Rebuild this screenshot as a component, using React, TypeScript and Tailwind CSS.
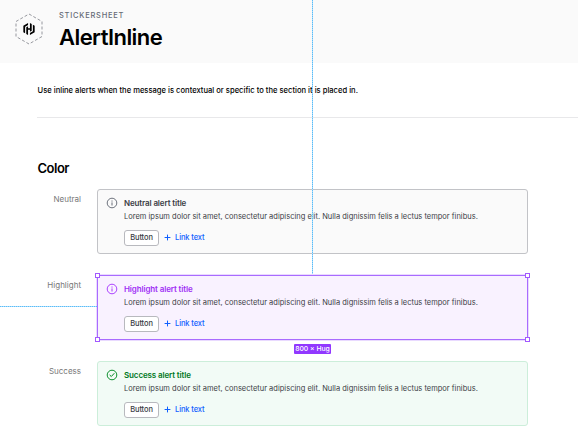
import { SiHashicorp } from 'react-icons/si';

type Tone = 'neutral' | 'highlight' | 'success';

const styles: Record<Tone, { box: string; title: string; icon: string }> = {
  neutral: { box: 'bg-[#fafafa] border-[#c2c3c7]', title: 'text-[#3b3d45]', icon: 'text-[#656a76]' },
  highlight: { box: 'bg-[#f9f2ff] border-[#ead2fe]', title: 'text-[#a02ff5]', icon: 'text-[#a737ff]' },
  success: { box: 'bg-[#f2fbf6] border-[#cceeda]', title: 'text-[#00781e]', icon: 'text-[#008a22]' },
};

function StatusIcon({ tone }: { tone: Tone }) {
  return (
    <svg className={`mt-[7px] ml-[8px] h-[12px] w-[12px] shrink-0 ${styles[tone].icon}`} viewBox="0 0 12 12" fill="none" stroke="currentColor">
      <circle cx="6" cy="6" r="4.8" strokeWidth="0.95" />
      {tone === 'success' ? (
        <path d="M3.9 6.2 5.3 7.5 8.1 4.5" strokeWidth="1" strokeLinecap="round" strokeLinejoin="round" />
      ) : (
        <path d="M6 5.8V8.1M6 3.9V4.2" strokeWidth="1" strokeLinecap="round" />
      )}
    </svg>
  );
}

function Handle({ place }: { place: string }) {
  return <span className={`absolute h-[5px] w-[5px] border border-[#a259ff] bg-white ${place}`} />;
}

function Alert({ tone, label }: { tone: Tone; label: string }) {
  const s = styles[tone];
  return (
    <div className="flex h-[65px]">
      <div className="w-[81px] pt-[5px] text-right text-[8px] leading-[10px] text-[#777777]">{label}</div>
      <div className={`relative ml-4 flex w-[431px] rounded-[3px] border ${s.box}`}>
        <StatusIcon tone={tone} />
        <div className="ml-[6px] pt-[8px]">
          <div className={`h-[13px] text-[8px] leading-[11px] font-semibold tracking-[-0.12px] whitespace-nowrap ${s.title}`}>{label} alert title</div>
          <div className="h-[19px] text-[7.5px] leading-[11px] tracking-[0.005px] whitespace-nowrap text-[#3b3d45]">
            Lorem ipsum dolor sit amet, consectetur adipiscing elit. Nulla dignissim felis a lectus tempor finibus.
          </div>
          <div className="flex items-center">
            <span className="flex h-[16px] w-[35px] items-center justify-center rounded-[3px] border border-[#b8b9be] bg-white text-[7.5px] leading-[10px] font-medium tracking-[-0.1px] text-[#3b3d45]">Button</span>
            <svg className="-mt-px ml-[5px] h-[7px] w-[7px]" viewBox="0 0 7 7" stroke="#1060ff" strokeWidth="1" strokeLinecap="round">
              <path d="M3.5 1V6M1 3.5H6" />
            </svg>
            <span className="ml-[4px] text-[7.5px] leading-[10px] font-medium tracking-[-0.1px] text-[#1060ff]">Link text</span>
          </div>
        </div>
        {tone === 'highlight' && (
          <>
            <span className="absolute -inset-px border border-[#a96bff] shadow-[0_0_0_1px_rgba(169,107,255,0.25)]" />
            <Handle place="-top-[3px] -left-[3px]" />
            <Handle place="-top-[3px] -right-[3px]" />
            <Handle place="-bottom-[3px] -left-[3px]" />
            <Handle place="-right-[3px] -bottom-[3px]" />
            <span className="absolute top-[68px] left-[196px] flex h-[10px] w-[37px] items-center justify-center rounded-[1px] bg-[#9138ff] text-[6.8px] leading-[10px] font-medium whitespace-nowrap text-white">800 × Hug</span>
          </>
        )}
      </div>
    </div>
  );
}

export default function App() {
  return (
    <div className="relative h-[439px] w-[578px] overflow-hidden bg-white font-['Inter',sans-serif]">
      <header className="flex h-[63px] bg-[#fafafa]">
        <div className="mt-[12px] ml-[13px] grid h-[34px] w-[32px] place-items-center">
          <svg className="col-start-1 row-start-1 h-[34px] w-[32px]" viewBox="0 0 32 34" fill="none">
            <path d="M16 2 29 9.5V24.5L16 32 3 24.5V9.5Z" stroke="#8b8d94" strokeWidth="0.9" strokeDasharray="3 2" />
          </svg>
          <SiHashicorp className="col-start-1 row-start-1 h-[12px] w-[12px] text-black" />
        </div>
        <div className="ml-[14px] pt-[10px]">
          <div className="text-[7.5px] leading-[11px] font-medium tracking-[0.75px] text-[#656a76]">STICKERSHEET</div>
          <h1 className="mt-[3px] text-[22px] leading-[26px] font-semibold tracking-[-0.55px] text-black">AlertInline</h1>
        </div>
      </header>
      <main>
        <p className="ml-[37.5px] h-[54px] pt-[22px] text-[7.6px] leading-[11px] font-medium tracking-[0.005px] text-black">
          Use inline alerts when the message is contextual or specific to the section it is placed in.
        </p>
        <div className="ml-[37px] h-px bg-[#e8e8ea]" />
        <h2 className="mt-[42px] ml-[37.5px] h-[29px] text-[13px] leading-[17px] font-semibold tracking-[-0.5px] text-black">Color</h2>
        <div className="flex flex-col gap-[21px]">
          <Alert tone="neutral" label="Neutral" />
          <Alert tone="highlight" label="Highlight" />
          <Alert tone="success" label="Success" />
        </div>
      </main>
      <div className="absolute top-0 left-[312px] h-[274px] w-px bg-[repeating-linear-gradient(180deg,#5bbcf8_0_1px,#a8dcfb_1px_2px)]" />
      <div className="absolute top-[306px] left-0 h-px w-[97px] bg-[repeating-linear-gradient(90deg,#5bbcf8_0_1px,#a8dcfb_1px_2px)]" />
    </div>
  );
}
